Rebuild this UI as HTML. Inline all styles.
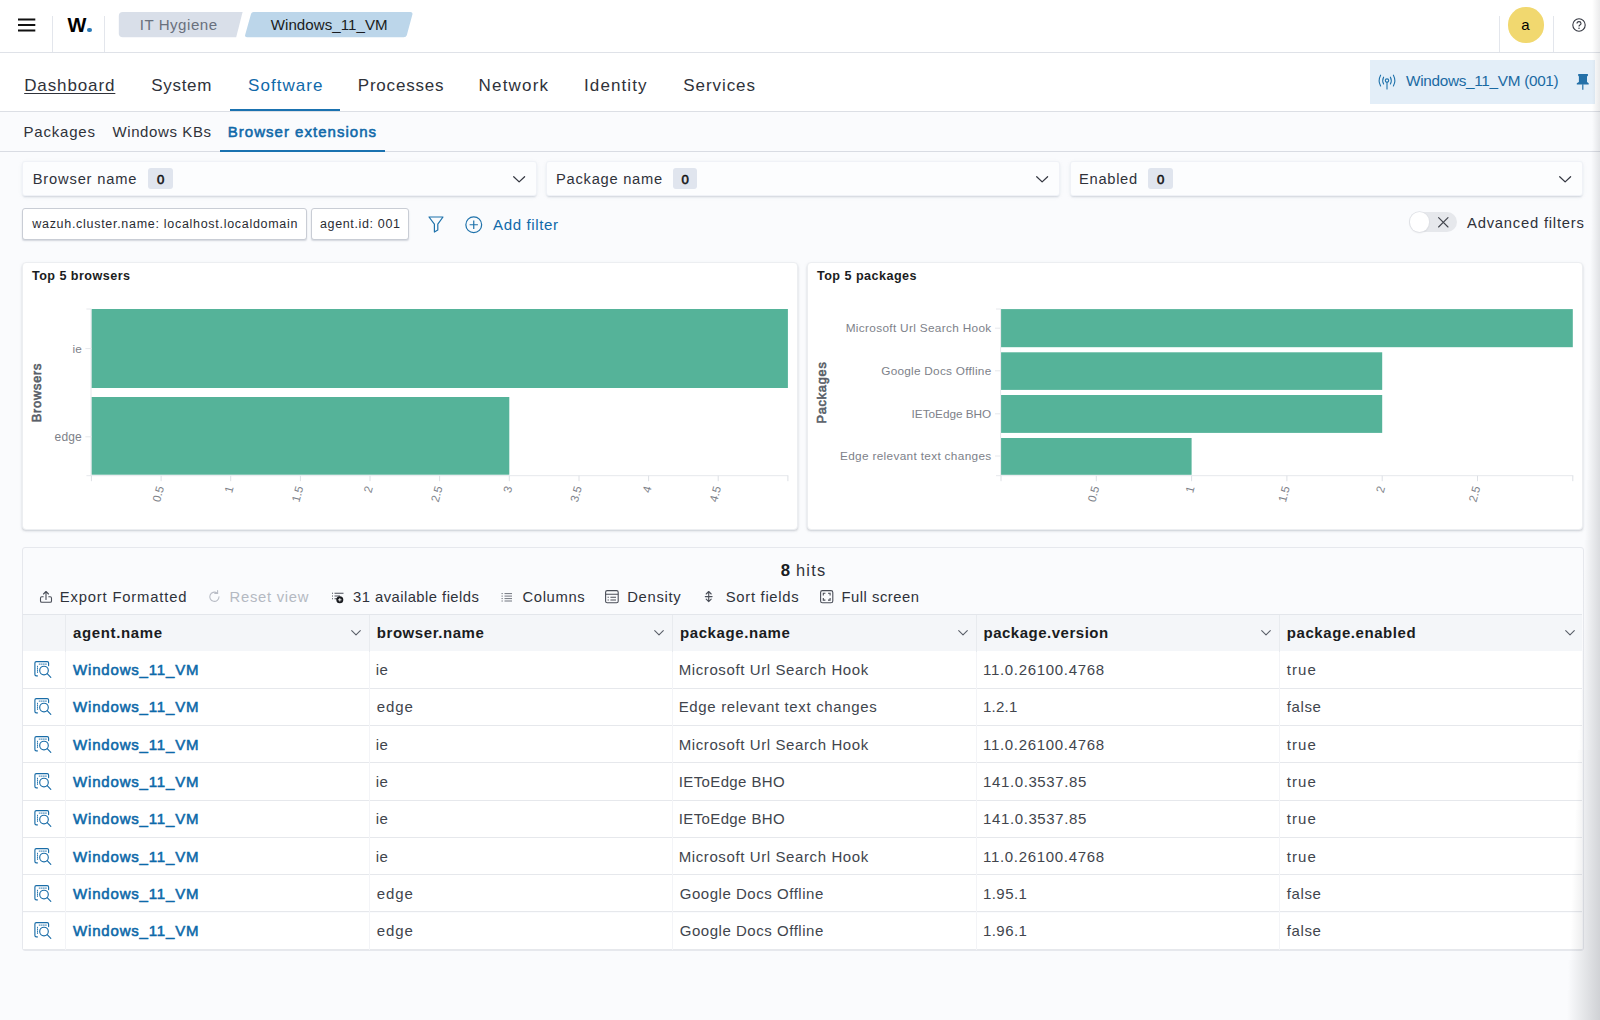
<!DOCTYPE html><html lang="en"><head><meta charset="utf-8"><title>IT Hygiene - Windows_11_VM - Browser extensions</title><style>
*{box-sizing:border-box}
html,body{margin:0;padding:0}
body{width:1600px;height:1020px;overflow:hidden;position:relative;background:#fafbfd;font-family:"Liberation Sans",sans-serif;color:#343741}
.t{position:absolute;white-space:pre;line-height:normal}
.abs{position:absolute}
.hdr{left:0;top:0;width:1600px;height:52.5px;background:#fff;border-bottom:1px solid #dfe2e8}
.vsep{width:1px;background:#e3e6ec;top:16px;height:36px}
.tabs{left:0;top:53px;width:1600px;height:58.5px;background:#fff;border-bottom:1px solid #dcdfe5}
.subline{left:0;top:151.3px;width:1600px;height:1px;background:#d9dce3}
.sel{top:161px;height:35px;background:#fcfdfe;border-radius:3px;box-shadow:inset 0 0 0 1px rgba(15,39,118,.05),0 2px 2px -1px rgba(152,162,179,.35),0 1px 4px -1px rgba(152,162,179,.25)}
.badge{top:168.3px;height:20.7px;width:24.5px;border-radius:3px;background:#e0e5ee}
.pill{top:208px;height:31.5px;background:#fff;border:1px solid #c9cdd5;border-radius:3px;box-shadow:0 1.5px 1.5px -0.5px rgba(120,130,150,.3)}
.panel{background:#fff;border:1px solid #eceef1;border-radius:4px;box-shadow:0 1.5px 2px -0.5px rgba(140,146,158,.36),0 1px 5px -2px rgba(140,146,158,.25)}
.tpanel{left:22px;top:547px;width:1561.5px;height:403.5px;border:1px solid #e6e8ed;border-radius:3px;background:#fafbfd}
.thead{left:23px;top:614.2px;width:1558.8px;height:37.6px;background:#f4f6f9;border-top:1px solid #e3e6eb;border-bottom:1px solid #e3e6ea}
.row{left:23px;width:1558.8px;height:37.3px;background:#fff;border-bottom:1px solid #e6e8ec}
.cline{top:615px;width:1px;height:335px;background:linear-gradient(#e8ebef 0,#e8ebef 36.5px,#f3f4f7 36.5px)}
svg{position:absolute;overflow:visible}
</style></head><body>
<header>
<div class="abs hdr"></div>
<div class="abs vsep" style="left:51.5px"></div>
<div class="abs vsep" style="left:104.0px"></div>
<div class="abs vsep" style="left:1499.0px"></div>
<div class="abs vsep" style="left:1552.9px"></div>
<svg style="left:17.5px;top:18px" width="18" height="14" viewBox="0 0 18 14"><path d="M0 1.5H17.3M0 7H17.3M0 12.5H17.3" stroke="#111" stroke-width="2" fill="none"/></svg>
<div class="abs" style="left:87.3px;top:27.7px;width:4.7px;height:4.7px;border-radius:50%;background:#2a7ab8"></div>
<svg style="left:0;top:0" width="500" height="52" viewBox="0 0 500 52"><path d="M122.8 12 H242.6 L236.2 37.2 H122.8 Q118.8 37.2 118.8 33.2 V16 Q118.8 12 122.8 12Z" fill="#d9dfe9"/><path d="M253.6 12 H410.5 Q413 12 412.4 14.5 L406.8 35.2 Q406.2 37.2 403.7 37.2 H247 Q244.4 37.2 245.2 34.7 L251 14 Q251.6 12 253.6 12Z" fill="#bcd6ea"/></svg>
<div class="abs" style="left:1508.4px;top:7.4px;width:35.2px;height:35.2px;border-radius:50%;background:#f1d86f"></div>
<svg style="left:1572px;top:18px" width="14" height="14" viewBox="0 0 14 14"><circle cx="7" cy="7" r="6.2" fill="none" stroke="#343741" stroke-width="1.1"/><path d="M5 5.6 Q5 3.6 7 3.6 Q9 3.6 9 5.4 Q9 6.5 7.9 7 Q7 7.5 7 8.4" fill="none" stroke="#343741" stroke-width="1.1"/><circle cx="7" cy="10.3" r="0.75" fill="#343741"/></svg>
<span class="t" style="left:67.55px;top:13.90px;font-size:20.00px;font-weight:700;color:#000;">W</span>
<span class="t" style="left:139.75px;top:16.40px;font-size:15.10px;color:#69707d;letter-spacing:0.518px;">IT Hygiene</span>
<span class="t" style="left:270.75px;top:16.40px;font-size:15.10px;color:#1a1c21;letter-spacing:0.041px;">Windows_11_VM</span>
<span class="t" style="left:1521.30px;top:16.20px;font-size:15.00px;color:#000;">a</span>
</header>
<nav>
<div class="abs tabs"></div>
<div class="abs" style="left:230px;top:109px;width:110px;height:2.3px;background:#1a72b0"></div>
<div class="abs" style="left:1369.7px;top:60px;width:225px;height:43.5px;background:#e3eef8"></div>
<svg style="left:1378.3px;top:74px" width="18" height="16" viewBox="0 0 18 16"><g fill="none" stroke="#1f72ab" stroke-width="1.1" stroke-linecap="round"><circle cx="9" cy="6.6" r="1.7"/><path d="M9 8.4V15"/><path d="M5.6 3.2 Q3.8 6.6 5.6 10"/><path d="M12.4 3.2 Q14.2 6.6 12.4 10"/><path d="M2.6 1.2 Q-0.3 6.6 2.6 12"/><path d="M15.4 1.2 Q18.3 6.6 15.4 12"/></g></svg>
<svg style="left:0;top:0" width="1600" height="110" viewBox="0 0 1600 110"><path d="M1578.6 74.1 H1587.5 Q1588 74.1 1588 74.6 V75.4 L1587 76.4 V81.9 L1588.7 83.2 V84.5 H1576.8 V83.2 L1578.9 81.9 V76.4 L1578.1 75.4 V74.6 Q1578.1 74.1 1578.6 74.1Z" fill="#2470a8"/><path d="M1582.8 84.3V89.8" stroke="#2470a8" stroke-width="1.2"/></svg>
<span class="t" style="left:24.20px;top:76.20px;font-size:17.00px;color:#2f323a;letter-spacing:0.886px;text-decoration:underline;text-underline-offset:1.8px;text-decoration-thickness:1.2px;">Dashboard</span>
<span class="t" style="left:151.25px;top:76.20px;font-size:17.00px;color:#2f323a;letter-spacing:0.697px;">System</span>
<span class="t" style="left:248.00px;top:76.20px;font-size:17.00px;color:#1069a9;letter-spacing:1.053px;">Software</span>
<span class="t" style="left:357.75px;top:76.20px;font-size:17.00px;color:#2f323a;letter-spacing:0.798px;">Processes</span>
<span class="t" style="left:478.50px;top:76.20px;font-size:17.00px;color:#2f323a;letter-spacing:1.200px;">Network</span>
<span class="t" style="left:584.00px;top:76.20px;font-size:17.00px;color:#2f323a;letter-spacing:1.099px;">Identity</span>
<span class="t" style="left:683.25px;top:76.20px;font-size:17.00px;color:#2f323a;letter-spacing:0.938px;">Services</span>
<span class="t" style="left:1406.00px;top:72.00px;font-size:15.30px;color:#1a6aa3;letter-spacing:-0.287px;">Windows_11_VM (001)</span>
</nav>
<nav>
<div class="abs subline"></div>
<div class="abs" style="left:220px;top:150px;width:164.5px;height:2.4px;background:#1a72b0"></div>
<span class="t" style="left:23.50px;top:122.90px;font-size:15.00px;color:#2f323a;letter-spacing:0.804px;">Packages</span>
<span class="t" style="left:112.50px;top:122.90px;font-size:15.00px;color:#2f323a;letter-spacing:0.597px;">Windows KBs</span>
<span class="t" style="left:227.75px;top:122.90px;font-size:15.00px;color:#1069a9;letter-spacing:1.021px;-webkit-text-stroke:0.55px #1069a9;">Browser extensions</span>
</nav>
<main>
<section>
<div class="abs sel" style="left:22px;width:514.5px"></div>
<svg style="left:512.7px;top:175.9px" width="12.3" height="6.8" viewBox="0 0 12.3 6.8"><path d="M0.7 0.7 L6.15 5.8999999999999995 L11.600000000000001 0.7" fill="none" stroke="#343741" stroke-width="1.25" stroke-linecap="round" stroke-linejoin="round"/></svg>
<div class="abs sel" style="left:546px;width:513.8px"></div>
<svg style="left:1036.0px;top:175.9px" width="12.3" height="6.8" viewBox="0 0 12.3 6.8"><path d="M0.7 0.7 L6.15 5.8999999999999995 L11.600000000000001 0.7" fill="none" stroke="#343741" stroke-width="1.25" stroke-linecap="round" stroke-linejoin="round"/></svg>
<div class="abs sel" style="left:1070.3px;width:512.7px"></div>
<svg style="left:1559.2px;top:175.9px" width="12.3" height="6.8" viewBox="0 0 12.3 6.8"><path d="M0.7 0.7 L6.15 5.8999999999999995 L11.600000000000001 0.7" fill="none" stroke="#343741" stroke-width="1.25" stroke-linecap="round" stroke-linejoin="round"/></svg>
<div class="abs badge" style="left:148px"></div>
<div class="abs badge" style="left:672.5px"></div>
<div class="abs badge" style="left:1148px"></div>
<div class="abs pill" style="left:22px;width:284.5px"></div>
<div class="abs pill" style="left:311px;width:98px"></div>
<svg style="left:428px;top:215.5px" width="16" height="17" viewBox="0 0 16 17"><path d="M1 1 H15 L9.8 8.2 V14 L6.4 16 V8.2Z" fill="none" stroke="#1f72ab" stroke-width="1.2" stroke-linejoin="round"/></svg>
<svg style="left:465px;top:216px" width="17.5" height="17.5" viewBox="0 0 17.5 17.5"><circle cx="8.75" cy="8.75" r="7.9" fill="none" stroke="#1f72ab" stroke-width="1.2"/><path d="M8.75 4.6V12.9M4.6 8.75H12.9" stroke="#1f72ab" stroke-width="1.2"/></svg>
<div class="abs" style="left:1409px;top:212.3px;width:48px;height:20px;border-radius:10px;background:#e6e8ec"></div>
<div class="abs" style="left:1409.6px;top:212.2px;width:19.6px;height:19.6px;border-radius:50%;background:#fff;box-shadow:0 0 0 0.8px #dfe1e6,0 1px 2px rgba(0,0,0,.10)"></div>
<svg style="left:1437.5px;top:217.4px" width="10.6" height="10.6" viewBox="0 0 10.6 10.6"><path d="M0.6 0.6L10 10M10 0.6L0.6 10" stroke="#43464e" stroke-width="1.15" stroke-linecap="round"/></svg>
<span class="t" style="left:32.75px;top:170.75px;font-size:14.70px;color:#2f323a;letter-spacing:0.816px;">Browser name</span>
<span class="t" style="left:157.12px;top:171.75px;font-size:13.20px;color:#111;-webkit-text-stroke:0.55px #111;">0</span>
<span class="t" style="left:556.00px;top:170.75px;font-size:14.70px;color:#2f323a;letter-spacing:0.745px;">Package name</span>
<span class="t" style="left:681.62px;top:171.75px;font-size:13.20px;color:#111;-webkit-text-stroke:0.55px #111;">0</span>
<span class="t" style="left:1079.00px;top:170.75px;font-size:14.70px;color:#2f323a;letter-spacing:0.711px;">Enabled</span>
<span class="t" style="left:1157.12px;top:171.75px;font-size:13.20px;color:#111;-webkit-text-stroke:0.55px #111;">0</span>
<span class="t" style="left:32.25px;top:216.80px;font-size:12.50px;color:#2a2c33;letter-spacing:0.707px;">wazuh.cluster.name: localhost.localdomain</span>
<span class="t" style="left:320.00px;top:216.80px;font-size:12.50px;color:#2a2c33;letter-spacing:0.639px;">agent.id: 001</span>
<span class="t" style="left:493.00px;top:215.70px;font-size:15.10px;color:#1069a9;letter-spacing:0.607px;">Add filter</span>
<span class="t" style="left:1467.00px;top:214.80px;font-size:14.80px;color:#2f323a;letter-spacing:0.775px;">Advanced filters</span>
</section>
<section>
<div class="abs panel" style="left:22px;top:262px;width:776.3px;height:268.3px"></div>
<div class="abs panel" style="left:807px;top:262px;width:776.3px;height:268.3px"></div>
<svg style="left:0;top:0" width="1600" height="540" viewBox="0 0 1600 540" font-family="Liberation Sans, sans-serif">
<rect x="91.4" y="309" width="696.5" height="79" fill="#55b399"/>
<rect x="91.4" y="397" width="417.9" height="77.7" fill="#55b399"/>
<path d="M91.0 309V475.7H788.3 M86.4 309H91.4 M86.4 475.7H91.4 M85.4 348.6H91.4 M85.4 436.8H91.4" fill="none" stroke="#e6e8ec" stroke-width="1"/>
<path d="M91.4 475.7V481.2" stroke="#dde0e5" stroke-width="1"/>
<path d="M161.1 475.7V481.2" stroke="#dde0e5" stroke-width="1"/>
<path d="M230.7 475.7V481.2" stroke="#dde0e5" stroke-width="1"/>
<path d="M300.4 475.7V481.2" stroke="#dde0e5" stroke-width="1"/>
<path d="M370.0 475.7V481.2" stroke="#dde0e5" stroke-width="1"/>
<path d="M439.6 475.7V481.2" stroke="#dde0e5" stroke-width="1"/>
<path d="M509.3 475.7V481.2" stroke="#dde0e5" stroke-width="1"/>
<path d="M579.0 475.7V481.2" stroke="#dde0e5" stroke-width="1"/>
<path d="M648.6 475.7V481.2" stroke="#dde0e5" stroke-width="1"/>
<path d="M718.2 475.7V481.2" stroke="#dde0e5" stroke-width="1"/>
<path d="M787.9 475.7V481.2" stroke="#dde0e5" stroke-width="1"/>
<text transform="translate(164.1 487.3) rotate(-75)" text-anchor="end" font-size="11.5" fill="#7d8189">0.5</text>
<text transform="translate(233.7 487.3) rotate(-75)" text-anchor="end" font-size="11.5" fill="#7d8189">1</text>
<text transform="translate(303.4 487.3) rotate(-75)" text-anchor="end" font-size="11.5" fill="#7d8189">1.5</text>
<text transform="translate(373.0 487.3) rotate(-75)" text-anchor="end" font-size="11.5" fill="#7d8189">2</text>
<text transform="translate(442.6 487.3) rotate(-75)" text-anchor="end" font-size="11.5" fill="#7d8189">2.5</text>
<text transform="translate(512.3 487.3) rotate(-75)" text-anchor="end" font-size="11.5" fill="#7d8189">3</text>
<text transform="translate(582.0 487.3) rotate(-75)" text-anchor="end" font-size="11.5" fill="#7d8189">3.5</text>
<text transform="translate(651.6 487.3) rotate(-75)" text-anchor="end" font-size="11.5" fill="#7d8189">4</text>
<text transform="translate(721.2 487.3) rotate(-75)" text-anchor="end" font-size="11.5" fill="#7d8189">4.5</text>
<text x="81.8" y="352.6" text-anchor="end" font-size="11.8" fill="#7d8189">ie</text>
<text x="81.8" y="440.6" text-anchor="end" font-size="12" fill="#7d8189" textLength="27.2" lengthAdjust="spacing">edge</text>
<text transform="translate(41.3 392.5) rotate(-90)" text-anchor="middle" font-size="12.8" font-weight="400" fill="#5a5f69" stroke="#5a5f69" stroke-width="0.6" letter-spacing="0.75">Browsers</text>
<rect x="1001" y="309.1" width="571.8" height="38.1" fill="#55b399"/>
<rect x="1001" y="352.3" width="381.2" height="37.6" fill="#55b399"/>
<rect x="1001" y="395" width="381.2" height="37.9" fill="#55b399"/>
<rect x="1001" y="438" width="190.6" height="36.8" fill="#55b399"/>
<path d="M1000.6 309V475.7H1573.3 M996 309H1001 M996 475.7H1001 M995 328.2H1001 M995 370.8H1001 M995 413.8H1001 M995 456H1001" fill="none" stroke="#e6e8ec" stroke-width="1"/>
<path d="M1001.0 475.7V481.2" stroke="#dde0e5" stroke-width="1"/>
<path d="M1096.3 475.7V481.2" stroke="#dde0e5" stroke-width="1"/>
<path d="M1191.6 475.7V481.2" stroke="#dde0e5" stroke-width="1"/>
<path d="M1286.9 475.7V481.2" stroke="#dde0e5" stroke-width="1"/>
<path d="M1382.2 475.7V481.2" stroke="#dde0e5" stroke-width="1"/>
<path d="M1477.5 475.7V481.2" stroke="#dde0e5" stroke-width="1"/>
<path d="M1572.8 475.7V481.2" stroke="#dde0e5" stroke-width="1"/>
<text transform="translate(1099.3 487.3) rotate(-75)" text-anchor="end" font-size="11.5" fill="#7d8189">0.5</text>
<text transform="translate(1194.6 487.3) rotate(-75)" text-anchor="end" font-size="11.5" fill="#7d8189">1</text>
<text transform="translate(1289.9 487.3) rotate(-75)" text-anchor="end" font-size="11.5" fill="#7d8189">1.5</text>
<text transform="translate(1385.2 487.3) rotate(-75)" text-anchor="end" font-size="11.5" fill="#7d8189">2</text>
<text transform="translate(1480.5 487.3) rotate(-75)" text-anchor="end" font-size="11.5" fill="#7d8189">2.5</text>
<text x="991.2" y="332.2" text-anchor="end" font-size="11.8" fill="#7d8189" textLength="145.5" lengthAdjust="spacing">Microsoft Url Search Hook</text>
<text x="991.2" y="374.8" text-anchor="end" font-size="11.8" fill="#7d8189" textLength="110" lengthAdjust="spacing">Google Docs Offline</text>
<text x="991.2" y="417.8" text-anchor="end" font-size="11.8" fill="#7d8189" textLength="79.6" lengthAdjust="spacing">IEToEdge BHO</text>
<text x="991.2" y="460.0" text-anchor="end" font-size="11.8" fill="#7d8189" textLength="151.2" lengthAdjust="spacing">Edge relevant text changes</text>
<text transform="translate(826.3 392.5) rotate(-90)" text-anchor="middle" font-size="12.8" font-weight="400" fill="#5a5f69" stroke="#5a5f69" stroke-width="0.6" letter-spacing="0.75">Packages</text>
</svg>
<span class="t" style="left:32.00px;top:269.10px;font-size:12.60px;font-weight:700;color:#1a1c21;letter-spacing:0.451px;">Top 5 browsers</span>
<span class="t" style="left:817.00px;top:269.10px;font-size:12.60px;font-weight:700;color:#1a1c21;letter-spacing:0.458px;">Top 5 packages</span>
</section>
<section>
<div class="abs tpanel"></div>
<div class="abs thead"></div>
<div class="abs row" style="top:651.40px"></div>
<div class="abs row" style="top:688.70px"></div>
<div class="abs row" style="top:726.00px"></div>
<div class="abs row" style="top:763.30px"></div>
<div class="abs row" style="top:800.60px"></div>
<div class="abs row" style="top:837.90px"></div>
<div class="abs row" style="top:875.20px"></div>
<div class="abs row" style="top:912.50px"></div>
<div class="abs cline" style="left:65.0px"></div>
<div class="abs cline" style="left:368.7px"></div>
<div class="abs cline" style="left:671.9px"></div>
<div class="abs cline" style="left:975.7px"></div>
<div class="abs cline" style="left:1278.5px"></div>
<svg style="left:350.5px;top:630px" width="10" height="5.8" viewBox="0 0 10 5.8"><path d="M0.7 0.7 L5.0 4.8999999999999995 L9.3 0.7" fill="none" stroke="#5a5f69" stroke-width="1.1" stroke-linecap="round" stroke-linejoin="round"/></svg>
<svg style="left:654px;top:630px" width="10" height="5.8" viewBox="0 0 10 5.8"><path d="M0.7 0.7 L5.0 4.8999999999999995 L9.3 0.7" fill="none" stroke="#5a5f69" stroke-width="1.1" stroke-linecap="round" stroke-linejoin="round"/></svg>
<svg style="left:958px;top:630px" width="10" height="5.8" viewBox="0 0 10 5.8"><path d="M0.7 0.7 L5.0 4.8999999999999995 L9.3 0.7" fill="none" stroke="#5a5f69" stroke-width="1.1" stroke-linecap="round" stroke-linejoin="round"/></svg>
<svg style="left:1261.2px;top:630px" width="10" height="5.8" viewBox="0 0 10 5.8"><path d="M0.7 0.7 L5.0 4.8999999999999995 L9.3 0.7" fill="none" stroke="#5a5f69" stroke-width="1.1" stroke-linecap="round" stroke-linejoin="round"/></svg>
<svg style="left:1565px;top:630px" width="10" height="5.8" viewBox="0 0 10 5.8"><path d="M0.7 0.7 L5.0 4.8999999999999995 L9.3 0.7" fill="none" stroke="#5a5f69" stroke-width="1.1" stroke-linecap="round" stroke-linejoin="round"/></svg>
<svg style="left:0;top:585px" width="1000" height="24" viewBox="0 585 1000 24">
<g fill="none" stroke="#4a4e58" stroke-width="1.1" stroke-linecap="round" stroke-linejoin="round"><path d="M43.2 596.8 H41.8 Q40.5 596.8 40.5 598.2 V601 Q40.5 602.3 41.8 602.3 H50.2 Q51.5 602.3 51.5 601 V598.2 Q51.5 596.8 50.2 596.8 H48.8"/><path d="M46 599.5V591.6 M43.5 594 L46 591.5 L48.5 594"/></g>
<g fill="none" stroke="#b9bdc6" stroke-width="1.1" stroke-linecap="round"><path d="M219 596.8 A4.6 4.6 0 1 1 217 593"/><path d="M217.6 590.6 V593.4 H214.8"/></g>
<g stroke="#4a4e58" stroke-width="1.1" fill="none"><path d="M334.5 593.2H343.5 M334.5 596H340 M334.5 598.8H338.5 M332 593.2H333 M332 596H333 M332 598.8H333"/></g><circle cx="339.8" cy="599.8" r="3.5" fill="#1a1c21"/><path d="M338.1 599.8H341.5M339.8 598.1V601.5" stroke="#fff" stroke-width="0.9"/>
<g stroke="#6a6f78" stroke-width="0.95" fill="none"><path d="M504.5 593.6H512 M504.5 596.1H512 M504.5 598.6H512 M504.5 601H512 M501.5 593.6H502.8 M501.5 596.1H502.8 M501.5 598.6H502.8 M501.5 601H502.8"/></g>
<g stroke="#4a4e58" stroke-width="1.1" fill="none"><rect x="605.6" y="590.6" width="12.6" height="12.2" rx="1.6"/><path d="M605.6 594.2H618.2 M610.4 597.2H616 M610.4 600H616 M607.6 597.2H608.8 M607.6 600H608.8"/></g>
<g stroke="#4a4e58" stroke-width="1.1" fill="none" stroke-linecap="round" stroke-linejoin="round"><path d="M708.7 591.6V601.6 M706.2 594 L708.7 591.5 L711.2 594 M706.2 599.2 L708.7 601.7 L711.2 599.2 M705.3 596.6H712.1"/></g>
<g stroke="#4a4e58" stroke-width="1.1" fill="none"><rect x="820.6" y="590.6" width="12.2" height="12.2" rx="1.8"/><path d="M823.3 595.4V593.3H825.4 M828 593.3H830.1V595.4 M830.1 598V600.1H828 M825.4 600.1H823.3V598"/></g>
</svg>
<svg style="left:33.5px;top:661.0px" width="18" height="17" viewBox="0 0 18 17"><g fill="none" stroke="#1a6da8" stroke-width="1.15" stroke-linecap="round"><path d="M3.4 14.9H2.3 Q0.9 14.9 0.9 13.5V2 Q0.9 0.6 2.3 0.6H13.2 Q14.6 0.6 14.6 2V4.6"/><path d="M3.5 5.2V11.6" stroke-dasharray="0.9 1.2" stroke-width="0.9"/><path d="M5.2 3.1H13" stroke-dasharray="0.9 1.2" stroke-width="0.9"/><circle cx="10" cy="9.5" r="4.3"/><path d="M13.2 12.7L16.8 16.3"/></g></svg>
<svg style="left:33.5px;top:698.3px" width="18" height="17" viewBox="0 0 18 17"><g fill="none" stroke="#1a6da8" stroke-width="1.15" stroke-linecap="round"><path d="M3.4 14.9H2.3 Q0.9 14.9 0.9 13.5V2 Q0.9 0.6 2.3 0.6H13.2 Q14.6 0.6 14.6 2V4.6"/><path d="M3.5 5.2V11.6" stroke-dasharray="0.9 1.2" stroke-width="0.9"/><path d="M5.2 3.1H13" stroke-dasharray="0.9 1.2" stroke-width="0.9"/><circle cx="10" cy="9.5" r="4.3"/><path d="M13.2 12.7L16.8 16.3"/></g></svg>
<svg style="left:33.5px;top:735.6px" width="18" height="17" viewBox="0 0 18 17"><g fill="none" stroke="#1a6da8" stroke-width="1.15" stroke-linecap="round"><path d="M3.4 14.9H2.3 Q0.9 14.9 0.9 13.5V2 Q0.9 0.6 2.3 0.6H13.2 Q14.6 0.6 14.6 2V4.6"/><path d="M3.5 5.2V11.6" stroke-dasharray="0.9 1.2" stroke-width="0.9"/><path d="M5.2 3.1H13" stroke-dasharray="0.9 1.2" stroke-width="0.9"/><circle cx="10" cy="9.5" r="4.3"/><path d="M13.2 12.7L16.8 16.3"/></g></svg>
<svg style="left:33.5px;top:772.9px" width="18" height="17" viewBox="0 0 18 17"><g fill="none" stroke="#1a6da8" stroke-width="1.15" stroke-linecap="round"><path d="M3.4 14.9H2.3 Q0.9 14.9 0.9 13.5V2 Q0.9 0.6 2.3 0.6H13.2 Q14.6 0.6 14.6 2V4.6"/><path d="M3.5 5.2V11.6" stroke-dasharray="0.9 1.2" stroke-width="0.9"/><path d="M5.2 3.1H13" stroke-dasharray="0.9 1.2" stroke-width="0.9"/><circle cx="10" cy="9.5" r="4.3"/><path d="M13.2 12.7L16.8 16.3"/></g></svg>
<svg style="left:33.5px;top:810.2px" width="18" height="17" viewBox="0 0 18 17"><g fill="none" stroke="#1a6da8" stroke-width="1.15" stroke-linecap="round"><path d="M3.4 14.9H2.3 Q0.9 14.9 0.9 13.5V2 Q0.9 0.6 2.3 0.6H13.2 Q14.6 0.6 14.6 2V4.6"/><path d="M3.5 5.2V11.6" stroke-dasharray="0.9 1.2" stroke-width="0.9"/><path d="M5.2 3.1H13" stroke-dasharray="0.9 1.2" stroke-width="0.9"/><circle cx="10" cy="9.5" r="4.3"/><path d="M13.2 12.7L16.8 16.3"/></g></svg>
<svg style="left:33.5px;top:847.5px" width="18" height="17" viewBox="0 0 18 17"><g fill="none" stroke="#1a6da8" stroke-width="1.15" stroke-linecap="round"><path d="M3.4 14.9H2.3 Q0.9 14.9 0.9 13.5V2 Q0.9 0.6 2.3 0.6H13.2 Q14.6 0.6 14.6 2V4.6"/><path d="M3.5 5.2V11.6" stroke-dasharray="0.9 1.2" stroke-width="0.9"/><path d="M5.2 3.1H13" stroke-dasharray="0.9 1.2" stroke-width="0.9"/><circle cx="10" cy="9.5" r="4.3"/><path d="M13.2 12.7L16.8 16.3"/></g></svg>
<svg style="left:33.5px;top:884.8px" width="18" height="17" viewBox="0 0 18 17"><g fill="none" stroke="#1a6da8" stroke-width="1.15" stroke-linecap="round"><path d="M3.4 14.9H2.3 Q0.9 14.9 0.9 13.5V2 Q0.9 0.6 2.3 0.6H13.2 Q14.6 0.6 14.6 2V4.6"/><path d="M3.5 5.2V11.6" stroke-dasharray="0.9 1.2" stroke-width="0.9"/><path d="M5.2 3.1H13" stroke-dasharray="0.9 1.2" stroke-width="0.9"/><circle cx="10" cy="9.5" r="4.3"/><path d="M13.2 12.7L16.8 16.3"/></g></svg>
<svg style="left:33.5px;top:922.0999999999999px" width="18" height="17" viewBox="0 0 18 17"><g fill="none" stroke="#1a6da8" stroke-width="1.15" stroke-linecap="round"><path d="M3.4 14.9H2.3 Q0.9 14.9 0.9 13.5V2 Q0.9 0.6 2.3 0.6H13.2 Q14.6 0.6 14.6 2V4.6"/><path d="M3.5 5.2V11.6" stroke-dasharray="0.9 1.2" stroke-width="0.9"/><path d="M5.2 3.1H13" stroke-dasharray="0.9 1.2" stroke-width="0.9"/><circle cx="10" cy="9.5" r="4.3"/><path d="M13.2 12.7L16.8 16.3"/></g></svg>
<span class="t" style="left:780.70px;top:560.75px;font-size:16.80px;font-weight:700;color:#1a1c21;">8</span>
<span class="t" style="left:796.00px;top:560.90px;font-size:16.40px;color:#2f323a;letter-spacing:1.200px;">hits</span>
<span class="t" style="left:59.75px;top:589.00px;font-size:14.80px;color:#2f323a;letter-spacing:0.828px;">Export Formatted</span>
<span class="t" style="left:229.50px;top:589.00px;font-size:14.80px;color:#b4b9c2;letter-spacing:0.730px;">Reset view</span>
<span class="t" style="left:353.00px;top:589.00px;font-size:14.80px;color:#2f323a;letter-spacing:0.459px;">31 available fields</span>
<span class="t" style="left:522.50px;top:589.00px;font-size:14.80px;color:#2f323a;letter-spacing:0.627px;">Columns</span>
<span class="t" style="left:627.25px;top:589.00px;font-size:14.80px;color:#2f323a;letter-spacing:0.676px;">Density</span>
<span class="t" style="left:725.75px;top:589.00px;font-size:14.80px;color:#2f323a;letter-spacing:0.711px;">Sort fields</span>
<span class="t" style="left:841.50px;top:589.00px;font-size:14.80px;color:#2f323a;letter-spacing:0.511px;">Full screen</span>
<span class="t" style="left:73.00px;top:623.50px;font-size:15.00px;font-weight:700;color:#1a1c21;letter-spacing:0.637px;">agent.name</span>
<span class="t" style="left:376.75px;top:623.50px;font-size:15.00px;font-weight:700;color:#1a1c21;letter-spacing:0.565px;">browser.name</span>
<span class="t" style="left:680.00px;top:623.50px;font-size:15.00px;font-weight:700;color:#1a1c21;letter-spacing:0.587px;">package.name</span>
<span class="t" style="left:983.50px;top:623.50px;font-size:15.00px;font-weight:700;color:#1a1c21;letter-spacing:0.507px;">package.version</span>
<span class="t" style="left:1286.75px;top:623.50px;font-size:15.00px;font-weight:700;color:#1a1c21;letter-spacing:0.573px;">package.enabled</span>
<span class="t" style="left:73.00px;top:661.00px;font-size:15.00px;color:#0d69a9;letter-spacing:0.824px;-webkit-text-stroke:0.55px #0d69a9;">Windows_11_VM</span>
<span class="t" style="left:375.75px;top:661.00px;font-size:15.00px;color:#41454d;letter-spacing:0.417px;">ie</span>
<span class="t" style="left:678.70px;top:661.00px;font-size:15.00px;color:#41454d;letter-spacing:0.604px;">Microsoft Url Search Hook</span>
<span class="t" style="left:983.00px;top:661.00px;font-size:15.00px;color:#41454d;letter-spacing:0.685px;">11.0.26100.4768</span>
<span class="t" style="left:1286.75px;top:661.00px;font-size:15.00px;color:#41454d;letter-spacing:1.082px;">true</span>
<span class="t" style="left:73.00px;top:698.30px;font-size:15.00px;color:#0d69a9;letter-spacing:0.824px;-webkit-text-stroke:0.55px #0d69a9;">Windows_11_VM</span>
<span class="t" style="left:376.75px;top:698.30px;font-size:15.00px;color:#41454d;letter-spacing:0.908px;">edge</span>
<span class="t" style="left:678.70px;top:698.30px;font-size:15.00px;color:#41454d;letter-spacing:0.651px;">Edge relevant text changes</span>
<span class="t" style="left:983.00px;top:698.30px;font-size:15.00px;color:#41454d;letter-spacing:0.220px;">1.2.1</span>
<span class="t" style="left:1286.75px;top:698.30px;font-size:15.00px;color:#41454d;letter-spacing:0.602px;">false</span>
<span class="t" style="left:73.00px;top:735.60px;font-size:15.00px;color:#0d69a9;letter-spacing:0.824px;-webkit-text-stroke:0.55px #0d69a9;">Windows_11_VM</span>
<span class="t" style="left:375.75px;top:735.60px;font-size:15.00px;color:#41454d;letter-spacing:0.417px;">ie</span>
<span class="t" style="left:678.70px;top:735.60px;font-size:15.00px;color:#41454d;letter-spacing:0.604px;">Microsoft Url Search Hook</span>
<span class="t" style="left:983.00px;top:735.60px;font-size:15.00px;color:#41454d;letter-spacing:0.685px;">11.0.26100.4768</span>
<span class="t" style="left:1286.75px;top:735.60px;font-size:15.00px;color:#41454d;letter-spacing:1.082px;">true</span>
<span class="t" style="left:73.00px;top:772.90px;font-size:15.00px;color:#0d69a9;letter-spacing:0.824px;-webkit-text-stroke:0.55px #0d69a9;">Windows_11_VM</span>
<span class="t" style="left:375.75px;top:772.90px;font-size:15.00px;color:#41454d;letter-spacing:0.417px;">ie</span>
<span class="t" style="left:678.70px;top:772.90px;font-size:15.00px;color:#41454d;letter-spacing:0.386px;">IEToEdge BHO</span>
<span class="t" style="left:983.00px;top:772.90px;font-size:15.00px;color:#41454d;letter-spacing:0.618px;">141.0.3537.85</span>
<span class="t" style="left:1286.75px;top:772.90px;font-size:15.00px;color:#41454d;letter-spacing:1.082px;">true</span>
<span class="t" style="left:73.00px;top:810.20px;font-size:15.00px;color:#0d69a9;letter-spacing:0.824px;-webkit-text-stroke:0.55px #0d69a9;">Windows_11_VM</span>
<span class="t" style="left:375.75px;top:810.20px;font-size:15.00px;color:#41454d;letter-spacing:0.417px;">ie</span>
<span class="t" style="left:678.70px;top:810.20px;font-size:15.00px;color:#41454d;letter-spacing:0.386px;">IEToEdge BHO</span>
<span class="t" style="left:983.00px;top:810.20px;font-size:15.00px;color:#41454d;letter-spacing:0.618px;">141.0.3537.85</span>
<span class="t" style="left:1286.75px;top:810.20px;font-size:15.00px;color:#41454d;letter-spacing:1.082px;">true</span>
<span class="t" style="left:73.00px;top:847.50px;font-size:15.00px;color:#0d69a9;letter-spacing:0.824px;-webkit-text-stroke:0.55px #0d69a9;">Windows_11_VM</span>
<span class="t" style="left:375.75px;top:847.50px;font-size:15.00px;color:#41454d;letter-spacing:0.417px;">ie</span>
<span class="t" style="left:678.70px;top:847.50px;font-size:15.00px;color:#41454d;letter-spacing:0.604px;">Microsoft Url Search Hook</span>
<span class="t" style="left:983.00px;top:847.50px;font-size:15.00px;color:#41454d;letter-spacing:0.685px;">11.0.26100.4768</span>
<span class="t" style="left:1286.75px;top:847.50px;font-size:15.00px;color:#41454d;letter-spacing:1.082px;">true</span>
<span class="t" style="left:73.00px;top:884.80px;font-size:15.00px;color:#0d69a9;letter-spacing:0.824px;-webkit-text-stroke:0.55px #0d69a9;">Windows_11_VM</span>
<span class="t" style="left:376.75px;top:884.80px;font-size:15.00px;color:#41454d;letter-spacing:0.908px;">edge</span>
<span class="t" style="left:679.70px;top:884.80px;font-size:15.00px;color:#41454d;letter-spacing:0.538px;">Google Docs Offline</span>
<span class="t" style="left:983.00px;top:884.80px;font-size:15.00px;color:#41454d;letter-spacing:0.428px;">1.95.1</span>
<span class="t" style="left:1286.75px;top:884.80px;font-size:15.00px;color:#41454d;letter-spacing:0.602px;">false</span>
<span class="t" style="left:73.00px;top:922.10px;font-size:15.00px;color:#0d69a9;letter-spacing:0.824px;-webkit-text-stroke:0.55px #0d69a9;">Windows_11_VM</span>
<span class="t" style="left:376.75px;top:922.10px;font-size:15.00px;color:#41454d;letter-spacing:0.908px;">edge</span>
<span class="t" style="left:679.70px;top:922.10px;font-size:15.00px;color:#41454d;letter-spacing:0.538px;">Google Docs Offline</span>
<span class="t" style="left:983.00px;top:922.10px;font-size:15.00px;color:#41454d;letter-spacing:0.428px;">1.96.1</span>
<span class="t" style="left:1286.75px;top:922.10px;font-size:15.00px;color:#41454d;letter-spacing:0.602px;">false</span>
</section>
</main>
<div class="abs" style="left:1592.0px;top:0px;width:8.0px;height:30px;background:linear-gradient(to right,rgba(30,35,45,0),rgba(30,35,45,0.092))"></div>
<div class="abs" style="left:1591.9px;top:30px;width:8.1px;height:30px;background:linear-gradient(to right,rgba(30,35,45,0),rgba(30,35,45,0.095))"></div>
<div class="abs" style="left:1591.9px;top:60px;width:8.1px;height:30px;background:linear-gradient(to right,rgba(30,35,45,0),rgba(30,35,45,0.098))"></div>
<div class="abs" style="left:1591.7px;top:90px;width:8.3px;height:30px;background:linear-gradient(to right,rgba(30,35,45,0),rgba(30,35,45,0.101))"></div>
<div class="abs" style="left:1591.5px;top:120px;width:8.5px;height:30px;background:linear-gradient(to right,rgba(30,35,45,0),rgba(30,35,45,0.104))"></div>
<div class="abs" style="left:1591.3px;top:150px;width:8.7px;height:30px;background:linear-gradient(to right,rgba(30,35,45,0),rgba(30,35,45,0.107))"></div>
<div class="abs" style="left:1591.0px;top:180px;width:9.0px;height:30px;background:linear-gradient(to right,rgba(30,35,45,0),rgba(30,35,45,0.110))"></div>
<div class="abs" style="left:1590.7px;top:210px;width:9.3px;height:30px;background:linear-gradient(to right,rgba(30,35,45,0),rgba(30,35,45,0.113))"></div>
<div class="abs" style="left:1590.4px;top:240px;width:9.6px;height:30px;background:linear-gradient(to right,rgba(30,35,45,0),rgba(30,35,45,0.116))"></div>
<div class="abs" style="left:1590.0px;top:270px;width:10.0px;height:30px;background:linear-gradient(to right,rgba(30,35,45,0),rgba(30,35,45,0.119))"></div>
<div class="abs" style="left:1589.5px;top:300px;width:10.5px;height:30px;background:linear-gradient(to right,rgba(30,35,45,0),rgba(30,35,45,0.122))"></div>
<div class="abs" style="left:1589.0px;top:330px;width:11.0px;height:30px;background:linear-gradient(to right,rgba(30,35,45,0),rgba(30,35,45,0.126))"></div>
<div class="abs" style="left:1588.5px;top:360px;width:11.5px;height:30px;background:linear-gradient(to right,rgba(30,35,45,0),rgba(30,35,45,0.129))"></div>
<div class="abs" style="left:1587.9px;top:390px;width:12.1px;height:30px;background:linear-gradient(to right,rgba(30,35,45,0),rgba(30,35,45,0.132))"></div>
<div class="abs" style="left:1587.3px;top:420px;width:12.7px;height:30px;background:linear-gradient(to right,rgba(30,35,45,0),rgba(30,35,45,0.135))"></div>
<div class="abs" style="left:1586.6px;top:450px;width:13.4px;height:30px;background:linear-gradient(to right,rgba(30,35,45,0),rgba(30,35,45,0.138))"></div>
<div class="abs" style="left:1585.9px;top:480px;width:14.1px;height:30px;background:linear-gradient(to right,rgba(30,35,45,0),rgba(30,35,45,0.141))"></div>
<div class="abs" style="left:1585.1px;top:510px;width:14.9px;height:30px;background:linear-gradient(to right,rgba(30,35,45,0),rgba(30,35,45,0.144))"></div>
<div class="abs" style="left:1584.3px;top:540px;width:15.7px;height:30px;background:linear-gradient(to right,rgba(30,35,45,0),rgba(30,35,45,0.147))"></div>
<div class="abs" style="left:1583.4px;top:570px;width:16.6px;height:30px;background:linear-gradient(to right,rgba(30,35,45,0),rgba(30,35,45,0.150))"></div>
<div class="abs" style="left:1582.5px;top:600px;width:17.5px;height:30px;background:linear-gradient(to right,rgba(30,35,45,0),rgba(30,35,45,0.153))"></div>
<div class="abs" style="left:1581.6px;top:630px;width:18.4px;height:30px;background:linear-gradient(to right,rgba(30,35,45,0),rgba(30,35,45,0.156))"></div>
<div class="abs" style="left:1580.6px;top:660px;width:19.4px;height:30px;background:linear-gradient(to right,rgba(30,35,45,0),rgba(30,35,45,0.159))"></div>
<div class="abs" style="left:1579.6px;top:690px;width:20.4px;height:30px;background:linear-gradient(to right,rgba(30,35,45,0),rgba(30,35,45,0.163))"></div>
<div class="abs" style="left:1578.5px;top:720px;width:21.5px;height:30px;background:linear-gradient(to right,rgba(30,35,45,0),rgba(30,35,45,0.166))"></div>
<div class="abs" style="left:1577.4px;top:750px;width:22.6px;height:30px;background:linear-gradient(to right,rgba(30,35,45,0),rgba(30,35,45,0.169))"></div>
<div class="abs" style="left:1576.2px;top:780px;width:23.8px;height:30px;background:linear-gradient(to right,rgba(30,35,45,0),rgba(30,35,45,0.172))"></div>
<div class="abs" style="left:1575.0px;top:810px;width:25.0px;height:30px;background:linear-gradient(to right,rgba(30,35,45,0),rgba(30,35,45,0.175))"></div>
<div class="abs" style="left:1573.7px;top:840px;width:26.3px;height:30px;background:linear-gradient(to right,rgba(30,35,45,0),rgba(30,35,45,0.178))"></div>
<div class="abs" style="left:1572.4px;top:870px;width:27.6px;height:30px;background:linear-gradient(to right,rgba(30,35,45,0),rgba(30,35,45,0.181))"></div>
<div class="abs" style="left:1571.1px;top:900px;width:28.9px;height:30px;background:linear-gradient(to right,rgba(30,35,45,0),rgba(30,35,45,0.184))"></div>
<div class="abs" style="left:1569.7px;top:930px;width:30.3px;height:30px;background:linear-gradient(to right,rgba(30,35,45,0),rgba(30,35,45,0.187))"></div>
<div class="abs" style="left:1568.2px;top:960px;width:31.8px;height:30px;background:linear-gradient(to right,rgba(30,35,45,0),rgba(30,35,45,0.190))"></div>
<div class="abs" style="left:1566.8px;top:990px;width:33.2px;height:30px;background:linear-gradient(to right,rgba(30,35,45,0),rgba(30,35,45,0.193))"></div>
</body></html>
